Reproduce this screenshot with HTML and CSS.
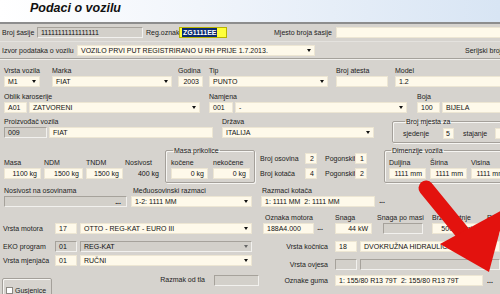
FILE: index.html
```html
<!DOCTYPE html>
<html lang="hr">
<head>
  <meta charset="UTF-8" />
  <title>Podaci o vozilu</title>
  <link rel="stylesheet" href="styles.css">
</head>
<body>
  <div class="header"><h1>Podaci o vozilu</h1></div>

  <div class="bar bar-top">
    <span class="lbl l-sasija">Broj šasije</span>
    <span class="in dis in-sasija">11111111111111111</span>
    <span class="lbl l-reg">Reg.oznaka</span>
    <span class="in in-reg"><span class="sel">ZG1111EE</span></span>
    <span class="lbl l-mjesto">Mjesto broja šasije</span>
    <span class="in in-mjesto"></span>
  </div>
  <div class="bar bar-izvor">
    <span class="lbl l-izvor">Izvor podataka o vozilu</span>
    <span class="in dd in-izvor">VOZILO PRVI PUT REGISTRIRANO U RH PRIJE 1.7.2013.</span>
    <span class="lbl l-serijski">Serijski broj</span>
  </div>

  <div class="main">
    <!-- vrsta, marka, godina, tip -->
    <div class="row row3">
      <div class="fld f-vrsta"><span class="lbl">Vrsta vozila</span><span class="in dd">M1</span></div>
      <div class="fld f-marka"><span class="lbl">Marka</span><span class="in dd">FIAT</span></div>
      <div class="fld f-godina"><span class="lbl">Godina</span><span class="in num">2003</span></div>
      <div class="fld f-tip"><span class="lbl">Tip</span><span class="in dd">PUNTO</span></div>
      <div class="fld f-atest"><span class="lbl">Broj atesta</span><span class="in"></span></div>
      <div class="fld f-model"><span class="lbl">Model</span><span class="in">1.2</span></div>
    </div>

    <div class="row row4">
      <div class="fld f-oblik">
        <span class="lbl">Oblik karoserije</span>
        <div class="pair"><span class="in w23">A01</span><span class="in dd grow">ZATVORENI</span></div>
      </div>
      <div class="fld f-namjena">
        <span class="lbl">Namjena</span>
        <div class="pair"><span class="in w24">001</span><span class="in dd grow">-</span></div>
      </div>
      <div class="fld f-boja">
        <span class="lbl">Boja</span>
        <div class="pair"><span class="in w23">100</span><span class="in grow">BIJELA</span></div>
      </div>
    </div>

    <div class="row row5">
      <div class="fld f-proizv">
        <span class="lbl">Proizvođač vozila</span>
        <div class="pair"><span class="in dis w43">009</span><span class="in grow">FIAT</span></div>
      </div>
      <div class="fld f-drzava"><span class="lbl">Država</span><span class="in dd">ITALIJA</span></div>
      <fieldset class="grp g-mjesta">
        <legend>Broj mjesta za</legend>
        <div class="inline">
          <span class="lbl l-sjed">sjedenje</span><span class="in num w11">5</span>
          <span class="lbl l-staj">stajanje</span><span class="in num w12"></span>
        </div>
      </fieldset>
    </div>

    <div class="row row6">
      <div class="masa">
        <div class="fld f-masa"><span class="lbl">Masa</span><span class="in num">1100 kg</span></div>
        <div class="fld f-ndm"><span class="lbl">NDM</span><span class="in num">1500 kg</span></div>
        <div class="fld f-tndm"><span class="lbl">TNDM</span><span class="in num">1500 kg</span></div>
        <div class="fld f-nosiv"><span class="lbl">Nosivost</span><span class="in num plain">400 kg</span></div>
      </div>
      <fieldset class="grp g-prikolica">
        <legend>Masa prikolice</legend>
        <div class="inline">
          <div class="fld f-koc"><span class="lbl">kočene</span><span class="in num">0 kg</span></div>
          <div class="fld f-nekoc"><span class="lbl">nekočene</span><span class="in num">0 kg</span></div>
        </div>
      </fieldset>
      <div class="osovine">
        <span class="lbl">Broj osovina</span><span class="in num">2</span>
        <span class="lbl">Pogonskih</span><span class="in num">1</span>
        <span class="lbl">Broj kotača</span><span class="in num">4</span>
        <span class="lbl">Pogonskih</span><span class="in num">2</span>
      </div>
      <fieldset class="grp g-dim">
        <legend>Dimenzije vozila</legend>
        <div class="inline">
          <div class="fld f-dim"><span class="lbl">Duljina</span><span class="in num">1111 mm</span></div>
          <div class="fld f-dim"><span class="lbl">Širina</span><span class="in num">1111 mm</span></div>
          <div class="fld f-dim"><span class="lbl">Visina</span><span class="in num">1111 mm</span></div>
        </div>
      </fieldset>
    </div>

    <div class="row row7">
      <div class="fld f-nososov">
        <span class="lbl">Nosivost na osovinama</span>
        <span class="in dis"><span class="dots">...</span></span>
      </div>
      <div class="fld f-medju"><span class="lbl">Međuosovinski razmaci</span><span class="in dd">1-2: 1111 MM</span></div>
      <div class="fld f-razm">
        <span class="lbl">Razmaci kotača</span>
        <div class="pair"><span class="in grow">1: 1111 MM&nbsp;&nbsp;2: 1111 MM</span><span class="dots">...</span></div>
      </div>
    </div>

    <div class="lower">
      <div class="col-left">
        <div class="line ln-motor">
          <span class="lbl l-left">Vrsta motora</span>
          <span class="in w22">17</span><span class="in dd w172">OTTO - REG-KAT - EURO III</span>
        </div>
        <div class="line ln-eko">
          <span class="lbl l-left">EKO program</span>
          <span class="in dis w22">01</span><span class="in dis dd w172">REG-KAT</span>
        </div>
        <div class="line ln-mjenj">
          <span class="lbl l-left">Vrsta mjenjača</span>
          <span class="in w22">01</span><span class="in dd w172">RUČNI</span>
        </div>
        <div class="line ln-tlo">
          <div class="gusj"><span class="chk"></span>Gusjenice</div>
          <span class="lbl l-tlo">Razmak od tla</span>
          <span class="in dis w45"></span>
        </div>
      </div>

      <div class="col-right">
        <div class="row row8">
          <div class="fld f-ozn">
            <span class="lbl">Oznaka motora</span>
            <div class="pair"><span class="in grow">188A4.000</span><span class="dots">...</span></div>
          </div>
          <div class="fld f-snaga"><span class="lbl">Snaga</span><span class="in num">44 kW</span></div>
          <div class="fld f-spm"><span class="lbl">Snaga po masi</span><span class="in dis"></span></div>
          <div class="fld f-brz"><span class="lbl">Brzina vrtnje</span><span class="in num">5000 1/min</span></div>
          <div class="fld f-obujam"><span class="lbl">Radni obujam</span><span class="in num">1242 cm3</span></div>
        </div>
        <div class="line ln-kocn">
          <span class="lbl l-right">Vrsta kočnica</span>
          <span class="in w22">18</span><span class="in grow">DVOKRUŽNA HIDRAULIČNA</span>
        </div>
        <div class="line ln-ovjes">
          <span class="lbl l-right">Vrsta ovjesa</span>
          <span class="in dis w22"></span><span class="in dis grow"></span>
        </div>
        <div class="line ln-guma">
          <span class="lbl l-right">Oznake guma</span>
          <span class="in w148">1: 155/80 R13 79T&nbsp;&nbsp;2: 155/80 R13 79T</span><span class="dots">...</span>
        </div>
      </div>
    </div>
  </div>

  <svg class="arrow" width="500" height="294" viewBox="0 0 500 294">
    <line x1="426" y1="188" x2="462" y2="232" stroke="#e3120e" stroke-width="15" stroke-linecap="round" />
    <polygon points="440,244 506,208 489,272" fill="#e3120e" />
  </svg>
</body>
</html>
```

FILE: styles.css
```css
* {
  box-sizing: border-box;
}
body {
  margin: 0;
  width: 500px;
  height: 294px;
  overflow: hidden;
  position: relative;
  font-family: "Liberation Sans", Arial, sans-serif;
  font-size: 7px;
  color: #1c1c1c;
  background: #d6d3ce;
}
.header {
  height: 24px;
  padding: 1px 0 0 30px;
  background: linear-gradient(90deg, #ffffff 0%, #f1f5fb 40%, #d8e5f4 100%);
  border-bottom: 2px solid #8d8d8d;
}
.header h1 {
  margin: 0;
  font-size: 12.5px;
  line-height: 15px;
  font-style: italic;
  font-weight: bold;
  color: #111;
}

.lbl {
  line-height: 9px;
  white-space: nowrap;
  flex: none;
}
.in {
  display: flex;
  align-items: center;
  flex: none;
  height: 11px;
  padding: 0 3px;
  line-height: 9px;
  white-space: nowrap;
  overflow: hidden;
  background: #fef9ea;
  border: 1px solid #ede6d3;
  color: #111;
}
.in.num {
  justify-content: flex-end;
}
.in.dis {
  background: #d3d0ca;
  border-color: #a6a29b #f2f1ee #f2f1ee #a6a29b;
}
.in.plain {
  background: transparent;
  border-color: transparent;
}
.dd::after {
  content: "";
  flex: none;
  margin-left: auto;
  border-style: solid;
  border-color: #111 transparent transparent;
  border-width: 3px 2.5px 0;
}
.dis.dd::after {
  border-top-color: #666;
}
.dots {
  flex: none;
  margin-left: auto;
  padding: 0 2px;
  font-weight: bold;
  line-height: 9px;
}

/* top bars */
.bar {
  display: flex;
  align-items: center;
}
.bar-top {
  height: 18px;
  padding-left: 2px;
  border-bottom: 1px solid #e4e2de;
}
.l-sasija { width: 35px; }
.in-sasija { width: 106px; background: #cfccc6; }
.l-reg { width: 33px; margin-left: 3px; }
.in-reg {
  width: 48px;
  padding: 0 2px;
  background: #ffff3a;
  border-color: #b9b400;
}
.sel {
  background: #0b2a6e;
  color: #fff;
  font-weight: bold;
  padding: 0 1px;
}
.l-mjesto { width: 105px; text-align: right; }
.in-mjesto { width: 170px; margin-left: 4px; }
.bar-izvor {
  height: 17px;
  padding-left: 2px;
  border-bottom: 1px solid #a5a29c;
  background: #d9d6d1;
}
.l-izvor { width: 75px; }
.in-izvor { width: 238px; }
.l-serijski { margin-left: 150px; }

/* main grid rows */
.main {
  border-top: 1px solid #f0efec;
}
.row {
  display: flex;
  align-items: flex-start;
}
.fld {
  display: flex;
  flex-direction: column;
  gap: 1px;
  flex: none;
}
.pair {
  display: flex;
  gap: 2px;
}
.grow { flex: 1; }
.w11 { width: 11px; }
.w12 { width: 12px; }
.w22 { width: 22px; }
.w23 { width: 23px; }
.w24 { width: 24px; }
.w43 { width: 43px; }
.w45 { width: 45px; }
.w148 { width: 148px; }
.w172 { width: 172px; }

.row3 { margin-top: 6px; }
.f-vrsta { width: 36px; margin-left: 4px; }
.f-marka { width: 120px; margin-left: 12px; }
.f-godina { width: 25px; margin-left: 6px; }
.f-tip { width: 119px; margin-left: 6px; }
.f-atest { width: 52px; margin-left: 8px; }
.f-model { width: 110px; margin-left: 7px; }

.row4 { margin-top: 5px; }
.f-oblik { width: 196px; margin-left: 4px; }
.f-namjena { width: 198px; margin-left: 9px; }
.f-boja { width: 85px; margin-left: 10px; }

.row5 { margin-top: 4px; }
.f-proizv { width: 209px; margin-left: 4px; }
.f-drzava { width: 152px; margin-left: 9px; }

.grp {
  margin: 0;
  min-width: 0;
  flex: none;
  border: 1px solid #a4a09a;
  border-radius: 2px;
  box-shadow: inset 1px 1px 0 #f6f5f2, 1px 1px 0 #f6f5f2;
}
.grp legend {
  margin-left: 2px;
  padding: 0 1px;
  line-height: 9px;
}
.inline {
  display: flex;
  align-items: center;
}
.g-mjesta {
  width: 125px;
  margin-left: 18px;
  padding: 2px 0 3px 10px;
}
.l-sjed { width: 40px; }
.l-staj { width: 32px; margin-left: 9px; }

.row6 { margin-top: 0; }
.masa {
  display: flex;
  margin-top: 15px;
}
.f-masa { width: 37px; margin-left: 4px; }
.f-ndm { width: 39px; margin-left: 3px; }
.f-tndm { width: 37px; margin-left: 3px; }
.f-nosiv { width: 38px; margin-left: 2px; }
.g-prikolica {
  width: 90px;
  margin: 3px 0 0 2px;
  padding: 3px 4px 3px 5px;
}
.g-prikolica .inline { gap: 5px; align-items: flex-start; }
.f-koc, .f-nekoc { width: 37px; }
.osovine {
  display: grid;
  grid-template-columns: 45px 12px 38px 12px;
  column-gap: 0;
  row-gap: 4px;
  align-items: center;
  margin: 10px 0 0 5px;
}
.osovine .lbl:nth-child(3), .osovine .lbl:nth-child(7) { margin-left: 8px; }
.osovine .in { padding: 0 2px; }
.g-dim {
  width: 125px;
  margin: 3px 0 0 17px;
  padding: 3px 0 3px 4px;
}
.g-dim .inline { gap: 4px; align-items: flex-start; }
.f-dim { width: 37px; }

.row7 { margin-top: 3px; }
.f-nososov { width: 123px; margin-left: 4px; }
.f-medju { width: 121px; margin-left: 4px; }
.f-medju .lbl { padding-left: 2px; }
.f-razm { width: 126px; margin-left: 9px; }
.f-razm .lbl { padding-left: 1px; }

/* lower part: left and right columns */
.lower {
  display: flex;
}
.col-left {
  width: 255px;
  flex: none;
}
.col-right {
  flex: 1;
  min-width: 0;
}
.line {
  display: flex;
  align-items: center;
}
.l-left { width: 55px; padding-left: 3px; }
.line .w172 { margin-left: 3px; }
.ln-motor { margin-top: 16px; }
.ln-eko { margin-top: 7px; }
.ln-mjenj { margin-top: 3px; }
.ln-tlo {
  margin-top: 9px;
  align-items: flex-start;
}
.gusj {
  flex: none;
  display: flex;
  align-items: center;
  gap: 2px;
  width: 50px;
  height: 30px;
  margin: 3px 0 0 2px;
  padding: 7px 0 0 3px;
  align-items: flex-start;
  border: 1px solid #a4a09a;
  border-radius: 2px;
  box-shadow: inset 1px 1px 0 #f6f5f2;
  line-height: 9px;
}
.chk {
  width: 7px;
  height: 7px;
  margin-top: 1px;
  background: #fff;
  border: 1px solid #8c8983;
}
.l-tlo { width: 153px; text-align: right; }
.ln-tlo .w45 { margin-left: 9px; }

.row8 { margin-top: 6px; }
.f-ozn { width: 62px; margin-left: 8px; }
.f-ozn .lbl { padding-left: 2px; }
.f-ozn .pair { gap: 1px; }
.f-snaga { width: 37px; margin-left: 10px; }
.f-spm { width: 48px; margin-left: 5px; }
.f-spm .in { width: 40px; margin-left: 6px; }
.f-brz { width: 48px; margin-left: 7px; }
.f-obujam { width: 40px; margin-left: 7px; }

.l-right { width: 73px; text-align: right; }
.line .w22 + .grow { margin-left: 3px; }
.ln-kocn .w22, .ln-ovjes .w22, .ln-guma .w148 { margin-left: 7px; }
.ln-kocn { margin-top: 7px; }
.ln-ovjes { margin-top: 7px; }
.ln-guma { margin-top: 5px; }
.ln-guma .dots { margin-left: 2px; }

.arrow {
  position: absolute;
  left: 0;
  top: 0;
  pointer-events: none;
}
```
